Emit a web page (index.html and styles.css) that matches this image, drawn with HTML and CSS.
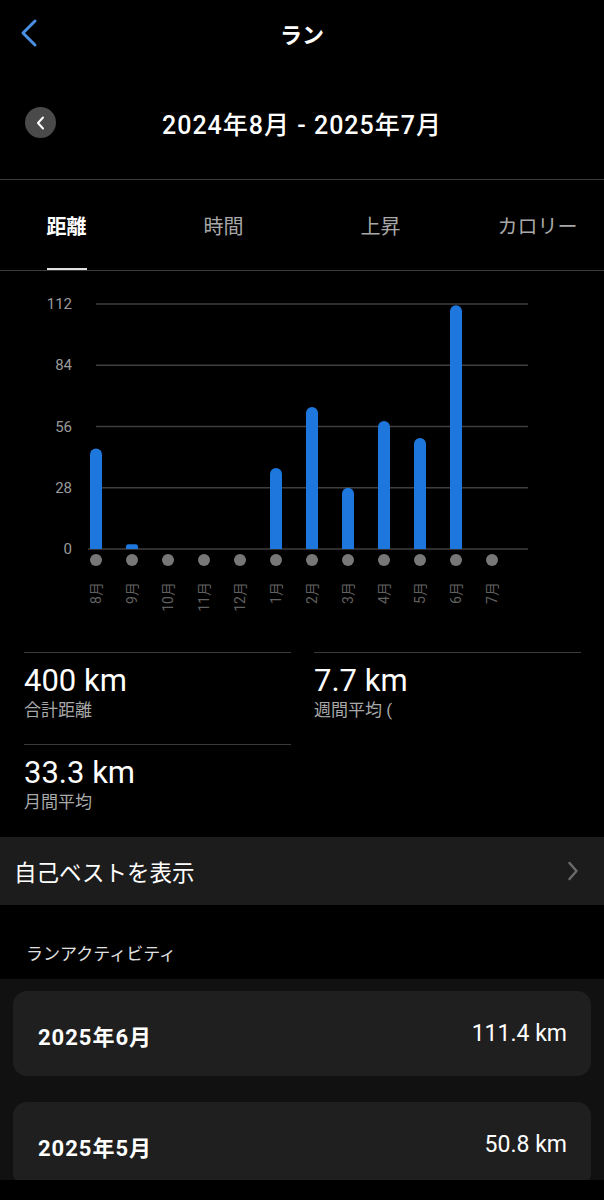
FILE: index.html
```html
<!DOCTYPE html>
<html lang="ja">
<head>
    <meta charset="UTF-8">
    <meta name="viewport" content="width=device-width, initial-scale=1.0">
    <title>ラン</title>
    <link rel="stylesheet" href="styles.css">
</head>
<body>

<header class="topbar">
    <a class="back-link" href="#">
        <svg width="20" height="30" viewBox="0 0 20 30">
            <polyline points="16,3 4,15 16,27" fill="none" stroke="#4a90e2" stroke-width="3" stroke-linecap="round" stroke-linejoin="round"/>
        </svg>
    </a>
    <h1 class="page-title">ラン</h1>
    <div></div>
</header>

<section class="period">
    <button class="period-prev">
        <svg width="10" height="14" viewBox="0 0 10 14">
            <polyline points="7,1.5 2,7 7,12.5" fill="none" stroke="#fff" stroke-width="2" stroke-linecap="round" stroke-linejoin="round"/>
        </svg>
    </button>
    <h2 class="period-title">2024年8月 - 2025年7月</h2>
    <div></div>
</section>

<nav class="tabs">
    <div class="tab active"><span>距離</span></div>
    <div class="tab"><span>時間</span></div>
    <div class="tab"><span>上昇</span></div>
    <div class="tab"><span>カロリー</span></div>
</nav>

<section class="chart">
    <svg width="604" height="368" viewBox="0 0 604 368">
        <!-- grid -->
        <g stroke="#3f3f3f" stroke-width="1.5">
            <line x1="96" y1="33" x2="528" y2="33"/>
            <line x1="96" y1="94.25" x2="528" y2="94.25"/>
            <line x1="96" y1="155.5" x2="528" y2="155.5"/>
            <line x1="96" y1="216.75" x2="528" y2="216.75"/>
            <line x1="88" y1="278" x2="528" y2="278"/>
        </g>
        <g class="axis-label" text-anchor="end" dominant-baseline="central">
            <text x="72" y="33">112</text>
            <text x="72" y="94.25">84</text>
            <text x="72" y="155.5">56</text>
            <text x="72" y="216.75">28</text>
            <text x="72" y="278">0</text>
        </g>
        <!-- bars: base 278, 2.1875px per km -->
        <g fill="#1e77dc">
            <path d="M90 278 V183.4 A6 6 0 0 1 102 183.4 V278 Z"/>
            <path d="M126 278 V275.6 A2.4 2.4 0 0 1 128.4 273.2 H135.6 A2.4 2.4 0 0 1 138 275.6 V278 Z"/>
            <path d="M270 278 V203 A6 6 0 0 1 282 203 V278 Z"/>
            <path d="M306 278 V142 A6 6 0 0 1 318 142 V278 Z"/>
            <path d="M342 278 V222.8 A6 6 0 0 1 354 222.8 V278 Z"/>
            <path d="M378 278 V156 A6 6 0 0 1 390 156 V278 Z"/>
            <path d="M414 278 V173 A6 6 0 0 1 426 173 V278 Z"/>
            <path d="M450 278 V40.3 A6 6 0 0 1 462 40.3 V278 Z"/>
        </g>
        <g fill="#777">
            <circle cx="96" cy="289" r="6"/>
            <circle cx="132" cy="289" r="6"/>
            <circle cx="168" cy="289" r="6"/>
            <circle cx="204" cy="289" r="6"/>
            <circle cx="240" cy="289" r="6"/>
            <circle cx="276" cy="289" r="6"/>
            <circle cx="312" cy="289" r="6"/>
            <circle cx="348" cy="289" r="6"/>
            <circle cx="384" cy="289" r="6"/>
            <circle cx="420" cy="289" r="6"/>
            <circle cx="456" cy="289" r="6"/>
            <circle cx="492" cy="289" r="6"/>
        </g>
        <g class="month-label" text-anchor="end" dominant-baseline="central">
            <text transform="translate(96 311) rotate(-90)">8月</text>
            <text transform="translate(132 311) rotate(-90)">9月</text>
            <text transform="translate(168 311) rotate(-90)">10月</text>
            <text transform="translate(204 311) rotate(-90)">11月</text>
            <text transform="translate(240 311) rotate(-90)">12月</text>
            <text transform="translate(276 311) rotate(-90)">1月</text>
            <text transform="translate(312 311) rotate(-90)">2月</text>
            <text transform="translate(348 311) rotate(-90)">3月</text>
            <text transform="translate(384 311) rotate(-90)">4月</text>
            <text transform="translate(420 311) rotate(-90)">5月</text>
            <text transform="translate(456 311) rotate(-90)">6月</text>
            <text transform="translate(492 311) rotate(-90)">7月</text>
        </g>
    </svg>
</section>

<section class="stats">
    <div class="stat">
        <div class="stat-value">400 km</div>
        <div class="stat-label">合計距離</div>
    </div>
    <div class="stat">
        <div class="stat-value">7.7 km</div>
        <div class="stat-label">週間平均 (</div>
    </div>
    <div class="stat">
        <div class="stat-value">33.3 km</div>
        <div class="stat-label">月間平均</div>
    </div>
</section>

<a class="best-row" href="#">
    <span>自己ベストを表示</span>
    <svg width="12" height="20" viewBox="0 0 12 20">
        <polyline points="2.5,2 9.5,10 2.5,18" fill="none" stroke="#6a6a6a" stroke-width="2.5" stroke-linecap="round" stroke-linejoin="round"/>
    </svg>
</a>

<h3 class="activity-title">ランアクティビティ</h3>

<div class="activity-list">
    <div class="activity-card">
        <span class="activity-month">2025年6月</span>
        <span class="activity-distance">111.4 km</span>
    </div>
    <div class="activity-card">
        <span class="activity-month">2025年5月</span>
        <span class="activity-distance">50.8 km</span>
    </div>
</div>

</body>
</html>
```

FILE: styles.css
```css
body, html {
    margin: 0;
    padding: 0;
    background-color: #000;
    color: #fff;
    font-family: 'Roboto', 'Noto Sans CJK JP', sans-serif;
}
a {
    color: inherit;
    text-decoration: none;
}
.topbar {
    height: 66px;
    display: grid;
    grid-template-columns: 1fr auto 1fr;
    align-items: center;
    padding: 0 19px;
}
.back-link {
    display: flex;
}
.page-title {
    margin: 0;
    font-size: 22px;
    font-weight: 700;
}
.period {
    height: 113px;
    display: grid;
    grid-template-columns: 1fr auto 1fr;
    align-items: center;
    padding: 0 25px;
    border-bottom: 1px solid #3a3a3a;
}
.period-prev {
    width: 31px;
    height: 31px;
    border: none;
    border-radius: 50%;
    background-color: #4a4a4a;
    display: flex;
    align-items: center;
    justify-content: center;
    padding: 0;
}
.period-title {
    margin: 0;
    font-size: 25px;
    font-weight: 500;
    letter-spacing: 1px;
}
.tabs {
    height: 90px;
    display: grid;
    grid-template-columns: repeat(4, 157px);
    margin-left: -12px;
    border-bottom: 1px solid #3a3a3a;
}
.tab {
    display: flex;
    justify-content: center;
    font-size: 20px;
    color: #a8a8a8;
}
.tab span {
    display: flex;
    align-items: center;
    box-sizing: border-box;
    padding-top: 2px;
    border-bottom: 2px solid transparent;
}
.tab.active {
    color: #fff;
    font-weight: 700;
}
.tab.active span {
    border-bottom-color: #e0e0e0;
}
.chart {
    height: 368px;
}
.chart svg {
    display: block;
}
.axis-label {
    font-size: 15px;
    fill: #9a9a9a;
}
.month-label {
    font-size: 14px;
    fill: #606060;
}
.stats {
    display: grid;
    grid-template-columns: 1fr 1fr;
    column-gap: 23px;
    padding: 13px 23px 1px 24px;
}
.stat {
    height: 92px;
    box-sizing: border-box;
    border-top: 1px solid #3a3a3a;
    padding-top: 10px;
}
.stat-value {
    font-size: 31px;
    line-height: 36px;
}
.stat-label {
    font-size: 17px;
    line-height: 22px;
    color: #a8a8a8;
}
.best-row {
    height: 68px;
    display: flex;
    align-items: center;
    justify-content: space-between;
    padding: 0 25px 0 14px;
    background-color: #1c1c1c;
    font-size: 22.5px;
}
.activity-title {
    margin: 0;
    padding: 37px 0 13px 26px;
    font-size: 17px;
    line-height: 24px;
    font-weight: 400;
    color: #e0e0e0;
}
.activity-list {
    height: 201px;
    overflow: hidden;
    background-color: #111;
    padding: 12px 13px 0 13px;
    box-sizing: border-box;
    display: flex;
    flex-direction: column;
    gap: 26px;
}
.activity-card {
    flex-shrink: 0;
    height: 85px;
    border-radius: 14px;
    background-color: #1f1f1f;
    display: flex;
    align-items: center;
    justify-content: space-between;
    padding: 0 24px 0 25px;
}
.activity-month {
    font-size: 22px;
    font-weight: 700;
    letter-spacing: 1px;
    padding-top: 3px;
}
.activity-distance {
    font-size: 23px;
}
```
